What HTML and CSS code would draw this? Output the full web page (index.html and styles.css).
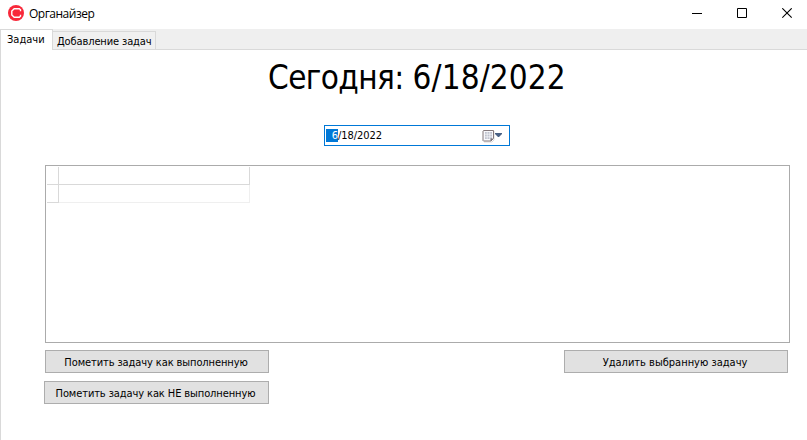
FILE: index.html
```html
<!DOCTYPE html>
<html lang="ru">
<head>
<meta charset="utf-8">
<title>Органайзер</title>
<link rel="stylesheet" href="styles.css">
</head>
<body>
<div class="window">
  <header class="titlebar">
    <svg class="logo" width="16" height="16" viewBox="0 0 16 16"><circle cx="8" cy="8" r="8" fill="#f8283a"/><path d="M12.500 6.200V4.800L11.300 3.800H6.200L3.800 6v4l2.400 2.200h5.100l1.200-1V9.800" fill="none" stroke="#fff" stroke-width="1.400"/></svg>
    <span class="app-name">Органайзер</span>
    <div class="controls">
      <svg width="11" height="11" viewBox="0 0 11 11"><path d="M0 5.500h10" stroke="#000"/></svg>
      <svg width="11" height="11" viewBox="0 0 11 11"><path d="M.5.5h9v9h-9z" fill="none" stroke="#000"/></svg>
      <svg width="11" height="11" viewBox="0 0 11 11"><path d="M.3.300l9.400 9.400M9.700.300L.300 9.700" stroke="#000" stroke-width="1.100"/></svg>
    </div>
  </header>
  <nav class="tabs">
    <div class="tab active"><span class="t-tasks">Задачи</span></div>
    <div class="tab"><span class="t-add">Добавление задач</span></div>
  </nav>
  <main class="page">
    <h1><span class="t-head">Сегодня:</span> <span class="t-date">6/18/2022</span></h1>
    <div class="date">
      <span class="month">6</span><span class="rest">/18/2022</span>
      <svg class="calendar" width="22" height="14" viewBox="0 0 22 14"><path d="M2 13h8l2-2V2" fill="none" stroke="#dcdada"/><path d="M1.500 1.500h10v8l-2.500 2.500H1.500l-.5-.5V2z" fill="#f8f8fb" stroke="#83787b"/><path d="M3 3h7v7H3z" fill="#c0c3cf"/><path d="M5.200 3v7M7.800 3v7M3 5.200h7M3 7.800h7" stroke="#fff" stroke-width=".6"/><path d="M8.500 12V9.500H11z" fill="#68636a"/><path d="M13 4h7v1l-3 3h-1l-3-3z" fill="#4a6184"/></svg>
    </div>
    <section class="list">
      <div class="grid">
        <div class="cell"></div><div class="cell"></div>
        <div class="cell"></div><div class="cell light"></div>
      </div>
    </section>
    <footer class="actions">
      <div class="left">
        <button><span class="t-done">Пометить задачу как выполненную</span></button>
        <button class="wide"><span class="t-undone">Пометить задачу как НЕ выполненную</span></button>
      </div>
      <button><span class="t-delete">Удалить выбранную задачу</span></button>
    </footer>
  </main>
</div>
</body>
</html>
```

FILE: styles.css
```css
* { box-sizing: border-box; }
body { margin: 0; background: #fff; color: #000; font: 11px/13px "DejaVu Sans Condensed", "DejaVu Sans", sans-serif; font-stretch: condensed; }
span { white-space: nowrap; }
.window { width: 807px; height: 440px; overflow: hidden; }
.titlebar { display: flex; align-items: center; height: 29px; padding: 0 14px 3px 8px; }
.app-name { margin: 1px 0 0 5px; font: 12px/16px "Open Sans", "Noto Sans", sans-serif; letter-spacing: -.5px; }
.controls { display: flex; gap: 34px; margin-left: auto; }
.tabs { display: flex; align-items: flex-end; height: 21px; background: linear-gradient(#d9d9d9, #d9d9d9) bottom / 100% 1px no-repeat #efefef; }
.tab { height: 19px; width: 103px; padding: 3px 0 0 4px; border: 1px solid #d9d9d9; border-left: 0; background: #f0f0f0; }
.tab.active { width: 53px; height: 21px; padding: 3px 0 0 6px; border: 1px solid #d9d9d9; border-bottom: 0; background: #fff; }
.t-add { letter-spacing: -.12px; }
.page { height: 390px; border-left: 1px solid #d9d9d9; padding: 7px 17px 0 44px; }
h1 { margin: 0; padding-left: 223px; font-size: 33px; line-height: 42px; font-weight: normal; letter-spacing: -.6px; }
.t-date { letter-spacing: .1px; }
.date { display: flex; align-items: center; width: 186px; height: 21px; margin: 26px 0 19px 279px; padding: 0 5px 0 1px; border: 1px solid #0078d7; }
.month { width: 12px; height: 13px; background: #0078d7; color: #fff; text-align: right; }
.rest { letter-spacing: -.05px; }
.calendar { margin-left: auto; }
.list { height: 178px; padding: 1px; border: 1px solid #ababab; }
.grid { display: grid; grid-template-columns: 12px 191px; grid-auto-rows: 18px; }
.cell { border: solid #d9d9d9; border-width: 0 1px 1px 0; }
.cell.light { border-color: #efefef; }
.actions { display: flex; justify-content: space-between; align-items: flex-start; padding: 7px 2px 0 0; }
.left { display: flex; flex-direction: column; gap: 8px; }
button { display: flex; align-items: center; justify-content: center; width: 224px; height: 23px; padding: 2px 2px 0 0; border: 1px solid #adadad; background: #e1e1e1; color: #000; font: inherit; }
.t-done, .t-undone { letter-spacing: -.1px; }
.wide { width: 225px; margin-left: -1px; }
```
